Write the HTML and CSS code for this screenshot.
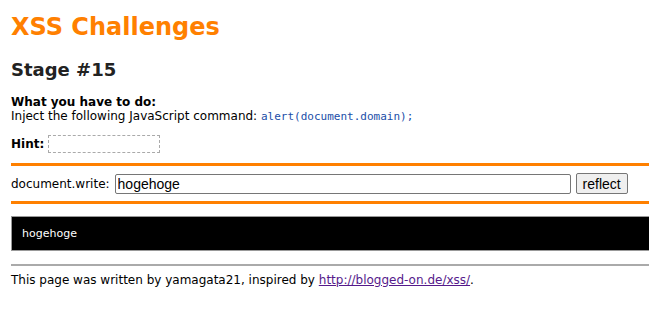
FILE: index.html
```html
<!DOCTYPE html>
<html>
<head>
<meta charset="utf-8">
<link rel="stylesheet" href="styles.css">
</head>
<body>
<div class="page">
  <h1 class="title">XSS Challenges</h1>
  <h2 class="stage">Stage #15</h2>
  <div class="task">
    <b>What you have to do:</b><br>
    Inject the following JavaScript command: <code class="cmd">alert(document.domain);</code>
  </div>
  <div class="hint"><b>Hint:</b> <span class="hintbox"></span></div>
  <form class="form">
    <label class="label">document.write:</label>
    <input class="field" type="text" value="hogehoge">
    <button class="btn" type="button">reflect</button>
  </form>
  <div class="output">hogehoge</div>
  <hr class="rule">
  <p class="footer">This page was written by yamagata21, inspired by <a class="link" href="#">http://blogged-on.de/xss/</a>.</p>
</div>
</body>
</html>
```
FILE: styles.css
```css
html { overflow: hidden; }
body {
  margin: 0;
  font-family: "DejaVu Sans", Verdana, sans-serif;
  font-size: 12px;
  color: #000;
  background: #fff;
}
.page {
  padding: 9px 0 0 11px;
  margin-right: -4px;
}
.title {
  margin: 0;
  font-size: 24px;
  line-height: 36px;
  color: #ff8000;
}
.stage {
  margin: 14px 0 0;
  font-size: 18px;
  line-height: 22px;
  color: #222;
}
.task {
  margin-top: 14px;
  line-height: 14px;
}
.cmd {
  font-family: "DejaVu Sans Mono", monospace;
  font-size: 11px;
  color: #1a4ea8;
}
.hint {
  margin-top: 11px;
  display: flex;
  align-items: center;
  gap: 4px;
  height: 18px;
}
.hintbox {
  display: inline-block;
  width: 110px;
  height: 16px;
  border: 1px dashed #aaa;
}
.form {
  margin-top: 10px;
  border-top: 3px solid #ff8000;
  border-bottom: 3px solid #ff8000;
  display: flex;
  align-items: center;
  padding: 7px 0;
}
.label { margin-right: 5px; }
.field {
  width: 456px;
  height: 20px;
  box-sizing: border-box;
  border: 1px solid #767676;
  border-radius: 2px;
  font-family: "Liberation Sans", Arial, sans-serif;
  font-size: 14px;
  padding: 1px 2px;
  margin: 0;
}
.btn {
  margin-left: 5px;
  height: 21px;
  padding: 0 6px;
  border: 1px solid #767676;
  border-radius: 2px;
  background: #efefef;
  font-family: "Liberation Sans", Arial, sans-serif;
  font-size: 14px;
}
.output {
  margin-top: 12px;
  background: #000;
  color: #fff;
  border: 1px solid #999;
  height: 33px;
  line-height: 33px;
  padding-left: 10px;
  font-size: 11px;
}
.rule {
  margin: 13px 0 0;
  border: 0;
  border-top: 2px solid #aaa;
}
.footer {
  margin: 7px 0 0;
}
.link { color: #551a8b; }
```
